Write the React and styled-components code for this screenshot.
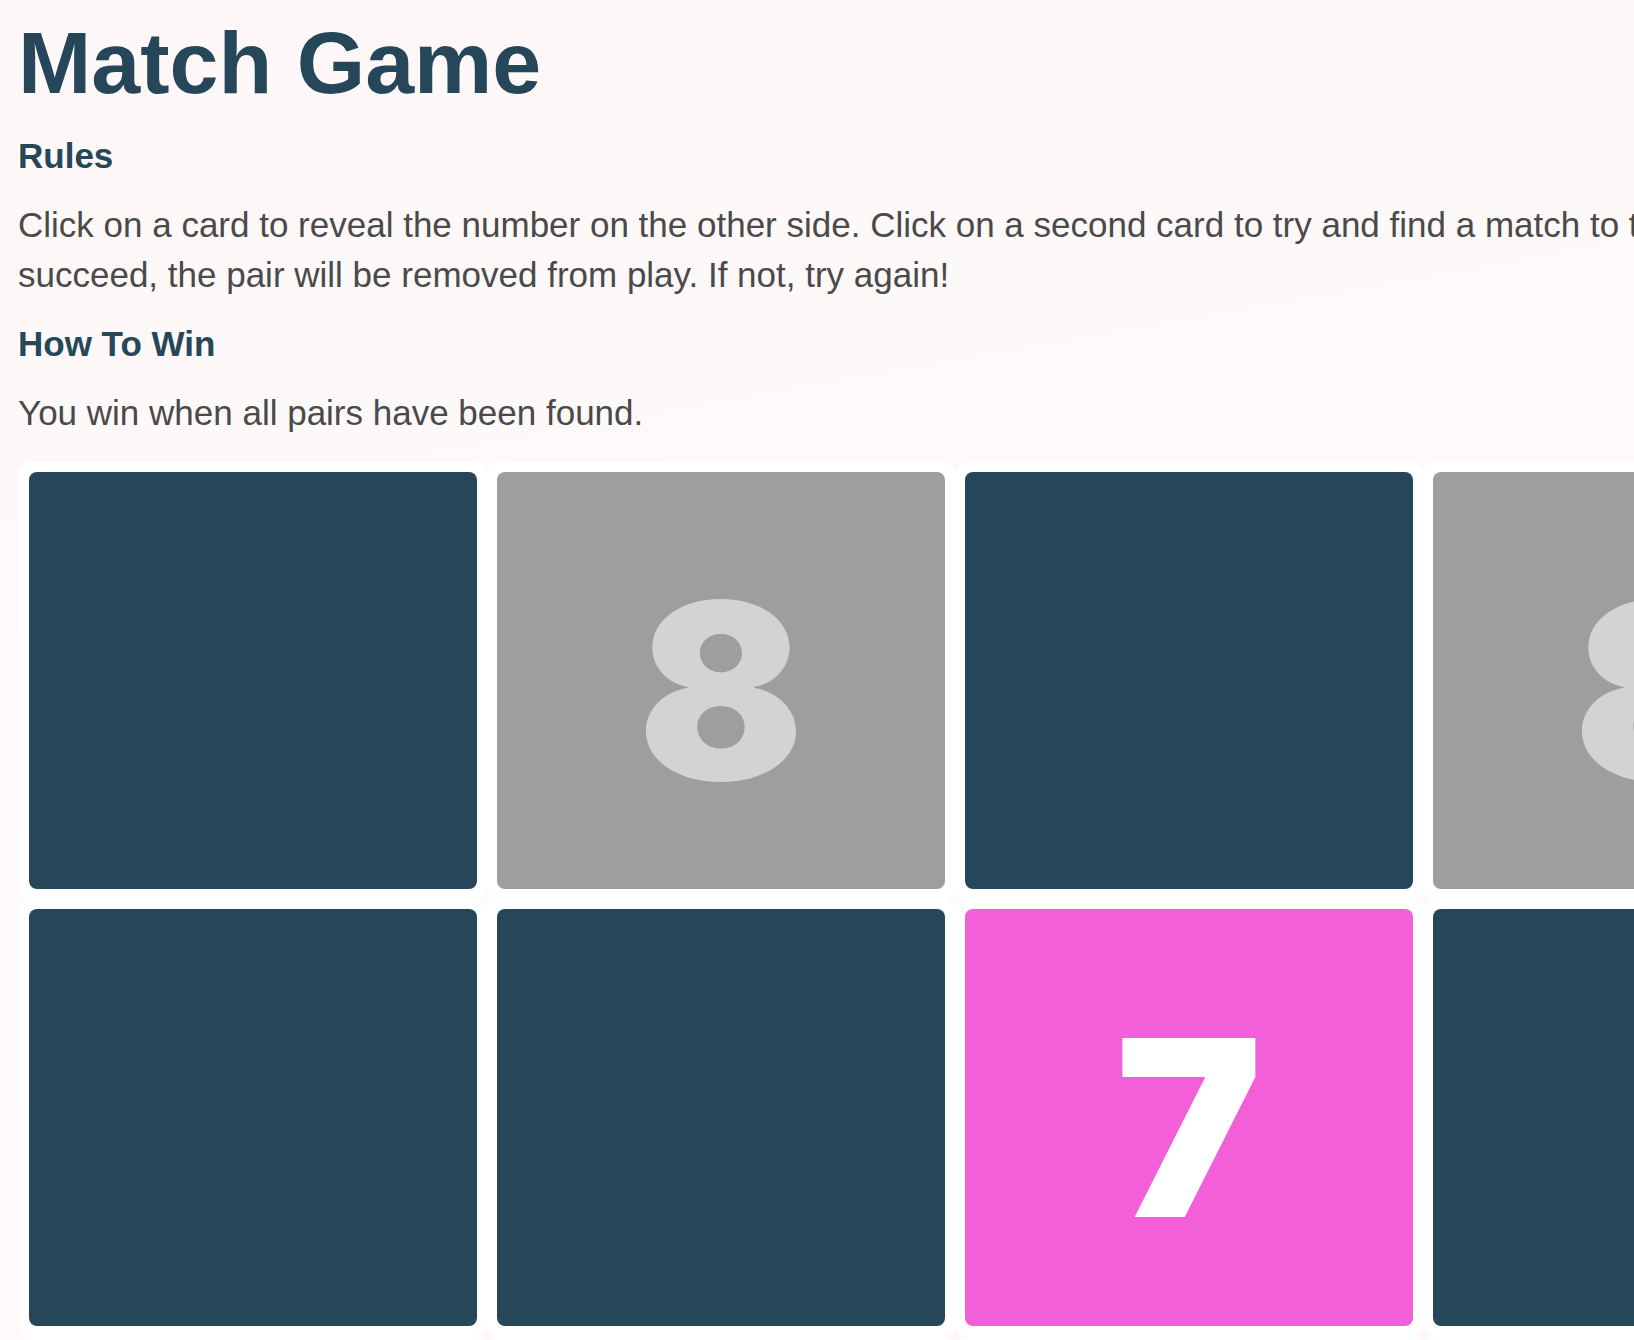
import React from 'react';
import styled, {createGlobalStyle} from 'styled-components';

const GlobalStyle = createGlobalStyle`
  html, body {
    margin: 0;
    padding: 0;
    overflow: hidden;
  }
  body {
    font-family: "Liberation Sans", Arial, sans-serif;
    background: linear-gradient(170deg, #fdf7f7 0%, #fffbfb 40%, #fff0f0 100%);
    min-height: 100vh;
  }
`;

const cards = [
  {face: 'hidden'}, {face: 'matched', value: 8}, {face: 'hidden'}, {face: 'matched', value: 8},
  {face: 'hidden'}, {face: 'hidden'}, {face: 'revealed', value: 7}, {face: 'hidden'},
  {face: 'hidden'}, {face: 'hidden'}, {face: 'hidden'}, {face: 'hidden'},
  {face: 'hidden'}, {face: 'hidden'}, {face: 'hidden'}, {face: 'hidden'},
];

export default function App() {
  return (
    <>
      <GlobalStyle />
      <Page>
        <Title>Match Game</Title>
        <Heading>Rules</Heading>
        <Text>
          Click on a card to reveal the number on the other side. Click on a second card to try and
          find a match to the first. If you succeed, the pair will be removed from play. If not, try again!
        </Text>
        <Heading>How To Win</Heading>
        <Text>You win when all pairs have been found.</Text>
        <Board>
          {cards.map((c, i) => (
            <Slot key={i}>
              <Card face={c.face}>{c.face !== 'hidden' && c.value}</Card>
            </Slot>
          ))}
        </Board>
      </Page>
    </>
  );
}

const Page = styled.main`
  display: flex;
  flex-direction: column;
  gap: 24px;
  width: 1872px;
  padding: 14px 18px 40px 18px;
`;

const Title = styled.h1`
  margin: 0;
  font-size: 88px;
  line-height: 98px;
  font-weight: 700;
  color: #26465a;
`;

const Heading = styled.h2`
  margin: 0;
  font-size: 35px;
  line-height: 40px;
  font-weight: 700;
  color: #26465a;
`;

const Text = styled.p`
  margin: 0;
  font-size: 35px;
  line-height: 50px;
  color: #4a4a4a;
`;

const Board = styled.div`
  display: grid;
  grid-template-columns: repeat(4, 468px);
  grid-auto-rows: 437px;
  margin-left: 1px;
`;

const Slot = styled.div`
  background: #fff;
  border-radius: 13px;
  padding: 10px;
  display: flex;
`;

const faces = {
  hidden: {bg: '#26465a', fg: 'transparent'},
  matched: {bg: '#9e9e9e', fg: '#d3d3d3'},
  revealed: {bg: '#f35ed9', fg: '#ffffff'},
};

const Card = styled.div`
  flex: 1;
  border-radius: 8px;
  background: ${p => faces[p.face].bg};
  color: ${p => faces[p.face].fg};
  display: flex;
  align-items: center;
  justify-content: center;
  padding-top: 20px;
  font-family: "Arial Black", Inter, "Liberation Sans", sans-serif;
  font-weight: 900;
  font-size: 246px;
  line-height: 1;
`;
